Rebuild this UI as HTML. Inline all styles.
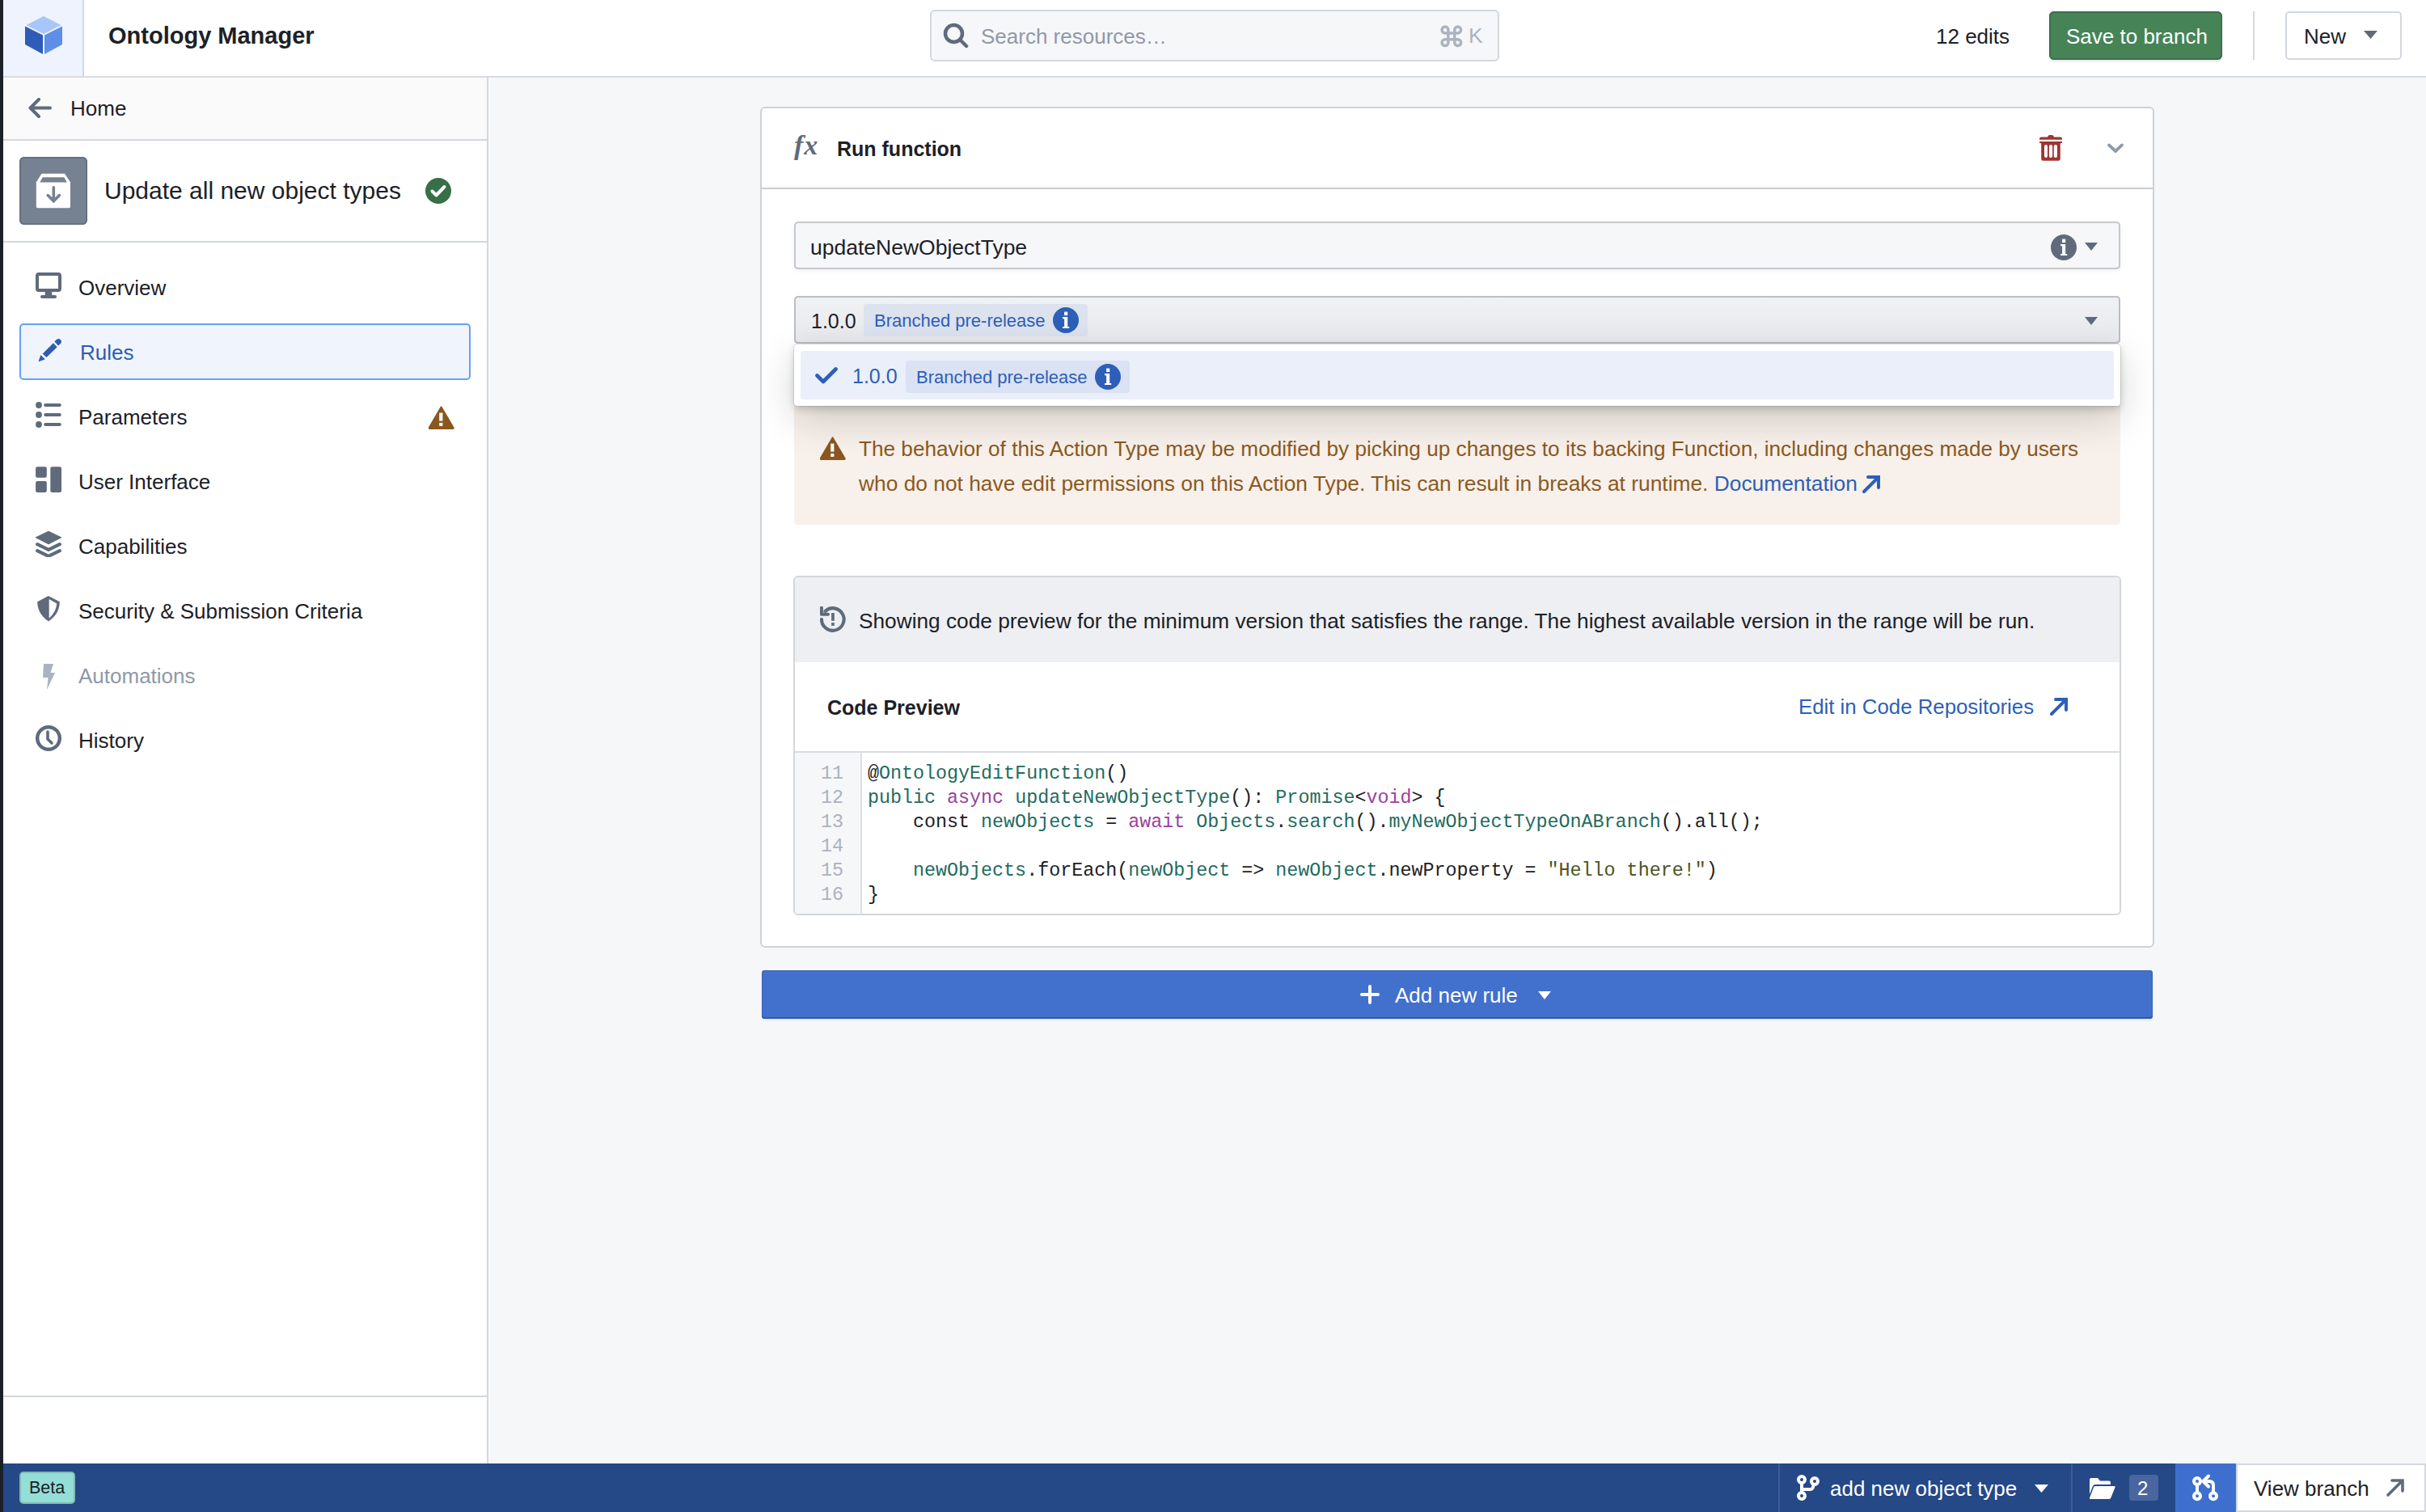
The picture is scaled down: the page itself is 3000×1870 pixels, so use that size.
<!DOCTYPE html>
<html><head><meta charset="utf-8">
<style>
*{box-sizing:border-box;margin:0;padding:0}
html,body{width:3000px;height:1870px;overflow:hidden}
body{position:relative;background:#f6f7f9;font-family:"Liberation Sans",sans-serif;color:#1c2127;font-size:26px}
.abs{position:absolute}
svg{display:block}
.t{position:absolute;white-space:nowrap;line-height:1}
.i{color:#1f6b60}.k{color:#9b3fa0}.s{color:#4d5420}
</style></head>
<body>
<!-- left dark bar -->
<div class="abs" style="left:0;top:0;width:4px;height:1870px;background:#1c2127;z-index:50"></div>

<!-- HEADER -->
<div class="abs" id="header" style="left:4px;top:0;width:2996px;height:96px;background:#fff;border-bottom:2px solid #d8dce1">
  <div class="abs" style="left:0;top:0;width:100px;height:94px;background:#eef3fd;border-right:2px solid #c9d9f7"></div>
</div>
<!-- cube logo -->
<svg class="abs" style="left:31px;top:20px" width="46" height="47" viewBox="0 0 46 47">
  <polygon points="23,0 44.5,11 23,22 1.5,11" fill="#a8c6fb"/>
  <polygon points="0,12.5 22,23.5 22,47 0,35" fill="#2f5cb6"/>
  <polygon points="46,12.5 24,23.5 24,47 46,35" fill="#5f8ee8"/>
</svg>
<div class="t" id="appname" style="left:134px;top:30px;font-size:29px;font-weight:bold;color:#1c2127">Ontology Manager</div>

<!-- search -->
<div class="abs" style="left:1150px;top:12px;width:704px;height:64px;background:#f6f7f9;border:2px solid #d3d8de;border-radius:6px"></div>
<svg class="abs" style="left:1166px;top:28px" width="32" height="32" viewBox="0 0 32 32">
  <circle cx="13.5" cy="13.5" r="10.5" fill="none" stroke="#5f6b7c" stroke-width="4.5"/>
  <line x1="21" y1="21" x2="29" y2="29" stroke="#5f6b7c" stroke-width="4.5" stroke-linecap="round"/>
</svg>
<div class="t" id="searchph" style="left:1213px;top:32px;font-size:26px;color:#8f99a8">Search resources…</div>
<svg class="abs" style="left:1781px;top:31px" width="28" height="28" viewBox="0 0 28 28">
  <path d="M9.9,9.9 H17.8 V17.8 H9.9 Z M9.9,9.9 V6 A3.9,3.9 0 1 0 6,9.9 H9.9 M17.8,9.9 V6 A3.9,3.9 0 1 1 21.7,9.9 H17.8 M17.8,17.8 V21.7 A3.9,3.9 0 1 0 21.7,17.8 H17.8 M9.9,17.8 V21.7 A3.9,3.9 0 1 1 6,17.8 H9.9" fill="none" stroke="#abb3bf" stroke-width="3.5"/>
</svg>
<div class="t" style="left:1816px;top:31px;font-size:26.5px;color:#abb3bf">K</div>

<div class="t" id="edits" style="left:2394px;top:32px;font-size:26px;color:#1c2127">12 edits</div>
<div class="abs" style="left:2534px;top:14px;width:214px;height:60px;background:#468457;border-radius:6px;box-shadow:inset 0 0 0 2px #3b6f4a,0 2px 3px rgba(0,0,0,.1)"></div>
<div class="t" id="savebtn" style="left:2555px;top:32px;font-size:26px;color:#fff">Save to branch</div>
<div class="abs" style="left:2786px;top:14px;width:2px;height:60px;background:#d8d9dc"></div>
<div class="abs" style="left:2826px;top:14px;width:144px;height:60px;background:#fff;border:2px solid #d3d8de;border-radius:5px"></div>
<div class="t" style="left:2849px;top:32px;font-size:26px;color:#1c2127">New</div>
<svg class="abs" style="left:2923px;top:38px" width="17" height="10" viewBox="0 0 17 10"><polygon points="0,0 17,0 8.5,10" fill="#5f6b7c"/></svg>

<!-- SIDEBAR -->
<div class="abs" id="sidebar" style="left:4px;top:96px;width:600px;height:1714px;background:#fff;border-right:2px solid #d3d8de">
  <div class="abs" style="left:0;top:0;width:598px;height:78px;background:#fafafa;border-bottom:2px solid #d3d8de"></div>
  <div class="abs" style="left:0;top:202px;width:598px;height:2px;background:#d3d8de"></div>
  <div class="abs" style="left:0;top:1630px;width:598px;height:2px;background:#d3d8de"></div>
</div>
<svg class="abs" style="left:35px;top:121px" width="29" height="25" viewBox="0 0 29 25">
  <path d="M13,2 L2.5,12.5 L13,23 M3,12.5 L27,12.5" fill="none" stroke="#5f6b7c" stroke-width="4" stroke-linecap="round" stroke-linejoin="round"/>
</svg>
<div class="t" id="home" style="left:87px;top:121px;font-size:26px">Home</div>

<div class="abs" style="left:24px;top:194px;width:84px;height:84px;background:#768192;border-radius:6px;box-shadow:inset 0 0 0 2px #65707f"></div>
<svg class="abs" style="left:44px;top:214px" width="44" height="44" viewBox="0 0 44 44">
  <path d="M7.5,0.8 L36,0.8 L43,11.2 L43,41.5 Q43,43.2 41.3,43.2 L2.5,43.2 Q0.8,43.2 0.8,41.5 L0.8,11.2 Z" fill="#fff"/>
  <path d="M8.8,5.2 L35.2,5.2 L38.8,11.6 L5.2,11.6 Z" fill="#768192"/>
  <path d="M22.3,17.8 L22.3,35 M15.2,27.6 L22.3,34.8 L29.4,27.6" fill="none" stroke="#768192" stroke-width="3.6" stroke-linecap="round" stroke-linejoin="miter"/>
</svg>
<div class="t" id="title" style="left:129px;top:221px;font-size:30px">Update all new object types</div>
<svg class="abs" style="left:526px;top:220px" width="32" height="32" viewBox="0 0 32 32">
  <circle cx="16" cy="16" r="16" fill="#366f48"/>
  <path d="M8.5,16.5 L13.5,21.5 L23.5,11" fill="none" stroke="#fff" stroke-width="4" stroke-linecap="round" stroke-linejoin="round"/>
</svg>

<!-- nav -->
<div class="abs" style="left:24px;top:400px;width:558px;height:70px;background:#f0f4fd;border:2px solid #6a9ff0;border-radius:5px"></div>

<!-- Overview monitor -->
<svg class="abs" style="left:44px;top:337px" width="32" height="32" viewBox="0 0 32 32">
  <rect x="2" y="2" width="28" height="20" rx="2" fill="none" stroke="#5f6b7c" stroke-width="4"/>
  <path d="M11.6,22 L20.4,22 L20.2,28.4 L11.8,28.4 Z" fill="#5f6b7c"/>
  <rect x="6" y="28" width="20" height="3.9" rx="1.95" fill="#5f6b7c"/>
</svg>
<div class="t" style="left:97px;top:343px">Overview</div>
<!-- Rules pencil -->
<svg class="abs" style="left:40px;top:410px" width="40" height="40" viewBox="0 0 40 40">
  <path d="M8,36.8 L10.6,29.6 L15.2,34.2 Z" fill="#2e5cb0" stroke="#2e5cb0" stroke-width="0.8" stroke-linejoin="round"/>
  <path d="M12.7,27.4 L25.9,14.3 L30.7,19.3 L17.5,32.1 Z" fill="#2e5cb0"/>
  <path d="M27.3,12.6 L30.5,9.6 Q32.3,8.2 34.2,9.6 L35.4,10.9 Q36.8,12.8 35.3,14.6 L32.1,17.6 Z" fill="#2e5cb0"/>
</svg>
<div class="t" style="left:99px;top:423px;color:#2e5cb0">Rules</div>
<!-- Parameters list -->
<svg class="abs" style="left:44px;top:497px" width="32" height="32" viewBox="0 0 32 32">
  <circle cx="4" cy="4" r="3.9" fill="#5f6b7c"/><circle cx="4" cy="16" r="3.9" fill="#5f6b7c"/><circle cx="4" cy="28" r="3.9" fill="#5f6b7c"/>
  <rect x="10.2" y="2" width="21.6" height="4" rx="2" fill="#5f6b7c"/><rect x="10.2" y="14" width="21.6" height="4" rx="2" fill="#5f6b7c"/><rect x="10.2" y="26" width="21.6" height="4" rx="2" fill="#5f6b7c"/>
</svg>
<div class="t" style="left:97px;top:503px">Parameters</div>
<svg class="abs" style="left:530px;top:502px" width="32" height="29" viewBox="0 0 32 29">
  <path d="M15.6,1.4 L30.6,27 Q31,27.9 30,27.9 L1.2,27.9 Q0.2,27.9 0.7,27 Z" fill="#8a571f" stroke="#8a571f" stroke-width="2" stroke-linejoin="round"/>
  <rect x="13.2" y="8.6" width="4.2" height="10" fill="#fff"/><rect x="13.2" y="20.9" width="4.2" height="4" fill="#fff"/>
</svg>
<!-- UI layout -->
<svg class="abs" style="left:44px;top:577px" width="32" height="32" viewBox="0 0 32 32">
  <rect x="0.1" y="0.2" width="13.7" height="13.6" rx="2" fill="#5f6b7c"/>
  <rect x="0.1" y="18" width="13.7" height="14" rx="2" fill="#5f6b7c"/>
  <rect x="18.3" y="0.2" width="13.7" height="31.8" rx="2" fill="#5f6b7c"/>
</svg>
<div class="t" style="left:97px;top:583px">User Interface</div>
<!-- Capabilities layers -->
<svg class="abs" style="left:44px;top:657px" width="32" height="32" viewBox="0 0 32 32">
  <path d="M16,0.3 L31.5,7.8 L16,15.6 L0.5,7.8 Z" fill="#5f6b7c" stroke="#5f6b7c" stroke-width="1.2" stroke-linejoin="round"/>
  <path d="M2.2,16.2 L16,22.9 L29.8,16.2 M2.2,24.2 L16,30.9 L29.8,24.2" fill="none" stroke="#5f6b7c" stroke-width="4.2" stroke-linecap="round" stroke-linejoin="round"/>
</svg>
<div class="t" style="left:97px;top:663px">Capabilities</div>
<!-- Security shield -->
<svg class="abs" style="left:46px;top:737px" width="28" height="32" viewBox="0 0 28 32">
  <path d="M13.8,0 L27.8,7.2 C27.8,18 22,26 13.9,31.6 C6,26 0.2,18 0.2,7.2 Z" fill="#5f6b7c"/>
  <path d="M14.7,3.9 L24.2,9.6 C23.5,17.5 19.5,23.5 14.7,27.6 Z" fill="#fff"/>
</svg>
<div class="t" style="left:97px;top:743px">Security &amp; Submission Criteria</div>
<!-- Automations bolt -->
<svg class="abs" style="left:51px;top:821px" width="18" height="32" viewBox="0 0 18 32">
  <path d="M3,0 L15,0 L11.5,11 L17,11 L7,32 L8.5,17 L2,17 Z" fill="#abb3bf"/>
</svg>
<div class="t" style="left:97px;top:823px;color:#8f99a8">Automations</div>
<!-- History clock -->
<svg class="abs" style="left:44px;top:897px" width="32" height="32" viewBox="0 0 32 32">
  <circle cx="16" cy="16" r="13.8" fill="none" stroke="#5f6b7c" stroke-width="4.4"/>
  <path d="M15,8 L15,17 L20,22" fill="none" stroke="#5f6b7c" stroke-width="3.6" stroke-linecap="round"/>
</svg>
<div class="t" style="left:97px;top:903px">History</div>



<!-- MAIN CARD -->
<div class="abs" id="card" style="left:940px;top:132px;width:1724px;height:1040px;background:#fff;border:2px solid #cfd1d4;border-radius:6px"></div>
<div class="abs" style="left:942px;top:232px;width:1720px;height:2px;background:#cbcdd1"></div>
<!-- fx -->
<div class="t" style="left:982px;top:163px;font-family:'Liberation Serif',serif;font-style:italic;font-weight:bold;font-size:34px;color:#5f6b7c;letter-spacing:1px">fx</div>
<div class="t" style="left:1035px;top:172px;font-weight:bold;font-size:25px">Run function</div>
<!-- trash -->
<svg class="abs" style="left:2522px;top:167px" width="28" height="32" viewBox="0 0 28 32">
  <path d="M10,2.4 Q10.5,0 13,0 L15,0 Q17.5,0 18,2.4 L26,2.4 Q28,2.4 28,4.4 L28,5.8 L0,5.8 L0,4.4 Q0,2.4 2,2.4 Z" fill="#9f3434"/>
  <path d="M0,8.1 L28,8.1 L28,9.4 Q28,10.2 25.8,10.2 L25.8,29.5 Q25.8,31.7 23.6,31.7 L4.4,31.7 Q2.2,31.7 2.2,29.5 L2.2,10.2 Q0,10.2 0,9.4 Z" fill="#9f3434"/>
  <rect x="6" y="12.1" width="4" height="15.8" rx="2" fill="#fff"/>
  <rect x="11.9" y="12.1" width="4.2" height="15.8" rx="2" fill="#fff"/>
  <rect x="17.8" y="12.1" width="4.2" height="15.8" rx="2" fill="#fff"/>
</svg>
<!-- chevron -->
<svg class="abs" style="left:2605px;top:176px" width="22" height="14" viewBox="0 0 22 14">
  <path d="M3,3.4 L11,11 L19,3.4" fill="none" stroke="#8f99a8" stroke-width="3.8" stroke-linecap="round" stroke-linejoin="round"/>
</svg>

<!-- function select -->
<div class="abs" style="left:982px;top:274px;width:1640px;height:59px;background:#f6f7f9;border-radius:5px;box-shadow:inset 0 0 0 2px #c6c8cc, inset 0 -2px 0 #bbbdc1, 0 2px 6px rgba(0,0,0,.06)"></div>
<div class="t" style="left:1002px;top:293px;font-size:26.5px">updateNewObjectType</div>
<svg class="abs" style="left:2536px;top:290px" width="32" height="32" viewBox="0 0 32 32">
  <circle cx="16" cy="16" r="16" fill="#5f6b7c"/>
  <rect x="14.1" y="5.6" width="4.1" height="4.5" fill="#fff"/>
  <path d="M12.1,11.9 L18.2,11.9 L18.2,24 L20.2,24 L20.2,26.1 L12.1,26.1 L12.1,24 L14.1,24 L14.1,14.2 L12.1,14.2 Z" fill="#fff"/>
</svg>
<svg class="abs" style="left:2578px;top:300px" width="16" height="10" viewBox="0 0 16 10"><polygon points="0,0 16,0 8,10" fill="#5f6b7c"/></svg>

<!-- version select -->
<div class="abs" style="left:982px;top:366px;width:1640px;height:59px;background:linear-gradient(#f0f1f4,#e8e9ed);border-radius:5px;box-shadow:inset 0 0 0 2px #bcbec3, inset 0 -2px 0 #b1b3b8"></div>
<div class="t" style="left:1003px;top:385px;font-size:25px">1.0.0</div>
<div class="abs" style="left:1068px;top:376px;width:277px;height:40px;background:#dce2ee;border-radius:4px"></div>
<div class="t" style="left:1081px;top:386px;font-size:22px;color:#2d5fb8">Branched pre-release</div>
<svg class="abs" style="left:1302px;top:380px" width="32" height="32" viewBox="0 0 32 32">
  <circle cx="16" cy="16" r="16" fill="#2d5fb8"/>
  <rect x="14.1" y="5.6" width="4.1" height="4.5" fill="#fff"/>
  <path d="M12.1,11.9 L18.2,11.9 L18.2,24 L20.2,24 L20.2,26.1 L12.1,26.1 L12.1,24 L14.1,24 L14.1,14.2 L12.1,14.2 Z" fill="#fff"/>
</svg>
<svg class="abs" style="left:2578px;top:392px" width="16" height="10" viewBox="0 0 16 10"><polygon points="0,0 16,0 8,10" fill="#5f6b7c"/></svg>

<!-- callout -->
<div class="abs" style="left:982px;top:460px;width:1640px;height:189px;background:#f8f0ea;border-radius:4px"></div>
<svg class="abs" style="left:1014px;top:540px" width="32" height="29" viewBox="0 0 32 29">
  <path d="M15.6,1.4 L30.6,27 Q31,27.9 30,27.9 L1.2,27.9 Q0.2,27.9 0.7,27 Z" fill="#8a571f" stroke="#8a571f" stroke-width="2" stroke-linejoin="round"/>
  <rect x="13.2" y="8.6" width="4.2" height="10" fill="#fff"/><rect x="13.2" y="20.9" width="4.2" height="4" fill="#fff"/>
</svg>
<div class="t" id="call1" style="left:1062px;top:542px;font-size:26.18px;color:#8a5a22">The behavior of this Action Type may be modified by picking up changes to its backing Function, including changes made by users</div>
<div class="t" id="call2" style="left:1062px;top:585px;font-size:26.35px;color:#8a5a22">who do not have edit permissions on this Action Type. This can result in breaks at runtime. <span style="color:#2d5fb8">Documentation</span></div>
<svg class="abs" id="docarrow" style="left:2302px;top:587px" width="24" height="24" viewBox="0 0 24 24">
  <path d="M3,21 L20,4 M8,3 L21,3 L21,16" fill="none" stroke="#2d5fb8" stroke-width="4" stroke-linecap="round" stroke-linejoin="miter"/>
</svg>

<!-- popover -->
<div class="abs" style="left:982px;top:426px;width:1640px;height:76px;background:#fff;border-radius:4px;box-shadow:0 0 0 1px rgba(17,20,24,.1),0 4px 10px rgba(17,20,24,.18),0 16px 48px rgba(17,20,24,.18)"></div>
<div class="abs" style="left:990px;top:434px;width:1624px;height:60px;background:#eaeffa;border-radius:4px"></div>
<svg class="abs" style="left:1008px;top:454px" width="28" height="21" viewBox="0 0 28 21">
  <path d="M2.5,10.5 L10,18 L25.5,2.5" fill="none" stroke="#2d5fb8" stroke-width="4.6" stroke-linecap="round" stroke-linejoin="round"/>
</svg>
<div class="t" style="left:1054px;top:453px;font-size:25px;color:#2d5fb8">1.0.0</div>
<div class="abs" style="left:1120px;top:446px;width:277px;height:40px;background:#dae2f3;border-radius:4px"></div>
<div class="t" style="left:1133px;top:456px;font-size:22px;color:#2d5fb8">Branched pre-release</div>
<svg class="abs" style="left:1354px;top:450px" width="32" height="32" viewBox="0 0 32 32">
  <circle cx="16" cy="16" r="16" fill="#2d5fb8"/>
  <rect x="14.1" y="5.6" width="4.1" height="4.5" fill="#fff"/>
  <path d="M12.1,11.9 L18.2,11.9 L18.2,24 L20.2,24 L20.2,26.1 L12.1,26.1 L12.1,24 L14.1,24 L14.1,14.2 L12.1,14.2 Z" fill="#fff"/>
</svg>

<!-- code preview container -->
<div class="abs" style="left:981px;top:712px;width:1642px;height:420px;background:#fff;border:2px solid #d3d6db;border-radius:6px;overflow:hidden">
  <div class="abs" style="left:0;top:0;width:1638px;height:105px;background:#eeeff2"></div>
  <div class="abs" style="left:0;top:215px;width:1638px;height:2px;background:#d8dce1"></div>
  <div class="abs" style="left:0;top:217px;width:83px;height:199px;background:#f6f7f9;border-right:2px solid #dce0e5"></div>
</div>
<svg class="abs" style="left:1014px;top:750px" width="32" height="32" viewBox="0 0 32 32">
  <path d="M2,16 A13.8,13.8 0 1 0 6.4,5.9" fill="none" stroke="#5f6b7c" stroke-width="4.1" stroke-linecap="round"/>
  <path d="M1.9,1.6 L1.9,9.8 L10,9.8" fill="none" stroke="#5f6b7c" stroke-width="4" stroke-linecap="round" stroke-linejoin="round"/>
  <rect x="14.1" y="8" width="3.7" height="9.8" fill="#5f6b7c"/><rect x="14.1" y="20.1" width="3.7" height="3.8" fill="#5f6b7c"/>
</svg>
<div class="t" id="infotext" style="left:1062px;top:755px;font-size:26.25px">Showing code preview for the minimum version that satisfies the range. The highest available version in the range will be run.</div>
<div class="t" style="left:1023px;top:863px;font-weight:bold;font-size:25px">Code Preview</div>
<div class="t" id="editlink" style="left:2224px;top:862px;font-size:25.8px;color:#2d5fb8">Edit in Code Repositories</div>
<svg class="abs" style="left:2534px;top:862px" width="24" height="24" viewBox="0 0 24 24">
  <path d="M3,21 L20,4 M8,3 L21,3 L21,16" fill="none" stroke="#2d5fb8" stroke-width="4" stroke-linecap="round"/>
</svg>
<div class="abs" id="code" style="left:983px;top:942px;width:1636px;font-family:'Liberation Mono',monospace;font-size:23.35px;line-height:30px;color:#1c2127;white-space:pre">
<div class="abs" style="left:0;top:0;width:60px;text-align:right;color:#abb3bf">11
12
13
14
15
16</div>
<div class="abs" style="left:90px;top:0"><span class="p">@</span><span class="i">OntologyEditFunction</span>()
<span class="i">public</span> <span class="k">async</span> <span class="i">updateNewObjectType</span>(): <span class="i">Promise</span>&lt;<span class="k">void</span>&gt; {
    const <span class="i">newObjects</span> = <span class="k">await</span> <span class="i">Objects</span>.<span class="i">search</span>().<span class="i">myNewObjectTypeOnABranch</span>().all();

    <span class="i">newObjects</span>.forEach(<span class="i">newObject</span> =&gt; <span class="i">newObject</span>.newProperty = <span class="s">"Hello there!"</span>)
}</div>
</div>

<!-- add new rule -->
<div class="abs" style="left:942px;top:1200px;width:1720px;height:60px;background:#4170cd;border-radius:4px;box-shadow:inset 0 -2px 0 #2f58a8,inset 0 0 0 1px #3561b8,0 2px 3px rgba(0,0,0,.08)"></div>
<svg class="abs" style="left:1682px;top:1218px" width="24" height="24" viewBox="0 0 24 24">
  <path d="M12,2 L12,22 M2,12 L22,12" fill="none" stroke="#fff" stroke-width="4" stroke-linecap="round"/>
</svg>
<div class="t" style="left:1725px;top:1218px;color:#fff">Add new rule</div>
<svg class="abs" style="left:1902px;top:1226px" width="16" height="10" viewBox="0 0 16 10"><polygon points="0,0 16,0 8,10" fill="#fff"/></svg>

<!-- STATUS BAR -->
<div class="abs" id="status" style="left:4px;top:1810px;width:2996px;height:60px;background:#254887"></div>
<div class="abs" style="left:24px;top:1820px;width:69px;height:40px;background:#94ded8;border:2px solid #80bbb3;border-radius:5px"></div>
<div class="t" id="beta" style="left:36px;top:1830px;font-size:21.5px;color:#1c2127">Beta</div>


<div class="abs" style="left:2199px;top:1810px;width:2px;height:60px;background:#3d5c98"></div>
<svg class="abs" style="left:2210px;top:1815px" width="40" height="50" viewBox="0 0 40 50">
  <circle cx="18" cy="15" r="4" fill="none" stroke="#fff" stroke-width="4"/>
  <circle cx="18" cy="35" r="4" fill="none" stroke="#fff" stroke-width="4"/>
  <circle cx="34" cy="17" r="4" fill="none" stroke="#fff" stroke-width="4"/>
  <path d="M18,19 L18,31 M18,27 L29,27 Q30.5,27 31.5,25.5 L33,21" fill="none" stroke="#fff" stroke-width="4"/>
</svg>
<div class="t" id="branchname" style="left:2263px;top:1828px;color:#fff">add new object type</div>
<svg class="abs" style="left:2516px;top:1836px" width="17" height="10" viewBox="0 0 17 10"><polygon points="0,0 17,0 8.5,10" fill="#fff"/></svg>
<div class="abs" style="left:2561px;top:1810px;width:2px;height:60px;background:#3d5c98"></div>
<svg class="abs" style="left:2582px;top:1826px" width="34" height="28" viewBox="0 0 34 28">
  <path d="M2,4 Q2,2 4,2 L12,2 L15,5.5 L26,5.5 Q28,5.5 28,7.5 L28,10 L9,10 Q7,10 6,12 L2,22 Z" fill="#fff"/>
  <path d="M9,12 L33,12 Q34,12 33.5,13.5 L28.5,26 Q28,28 26,28 L3,28 Q1.5,28 2,26.5 L7,13.5 Q7.5,12 9,12 Z" fill="#fff"/>
</svg>
<div class="abs" style="left:2633px;top:1824px;width:36px;height:32px;background:#4a66a0;border-radius:4px"></div>
<div class="t" style="left:2643px;top:1829px;font-size:24px;color:#fff">2</div>
<div class="abs" style="left:2690px;top:1810px;width:75px;height:60px;background:#3f6fce"></div>
<svg class="abs" style="left:2690px;top:1815px" width="75" height="50" viewBox="0 0 75 50">
  <circle cx="27" cy="17" r="4" fill="none" stroke="#fff" stroke-width="4"/>
  <circle cx="27" cy="35.2" r="4" fill="none" stroke="#fff" stroke-width="4"/>
  <circle cx="47" cy="35.2" r="4" fill="none" stroke="#fff" stroke-width="4"/>
  <path d="M27,21 L27,31.2 M47,31.2 L47,22 Q47,17 42,17 L36,17" fill="none" stroke="#fff" stroke-width="4"/>
  <path d="M41,10.5 L34.5,17 L41,23.5" fill="none" stroke="#fff" stroke-width="4" stroke-linecap="round" stroke-linejoin="round"/>
</svg>
<div class="abs" style="left:2765px;top:1810px;width:235px;height:60px;background:#fff;border:2px solid #d3d8de"></div>
<div class="t" id="viewbranch" style="left:2787px;top:1828px">View branch</div>
<svg class="abs" style="left:2950px;top:1828px" width="24" height="24" viewBox="0 0 24 24">
  <path d="M3,21 L20,4 M8,3 L21,3 L21,16" fill="none" stroke="#5f6b7c" stroke-width="3.6" stroke-linecap="round"/>
</svg>
</body></html>
